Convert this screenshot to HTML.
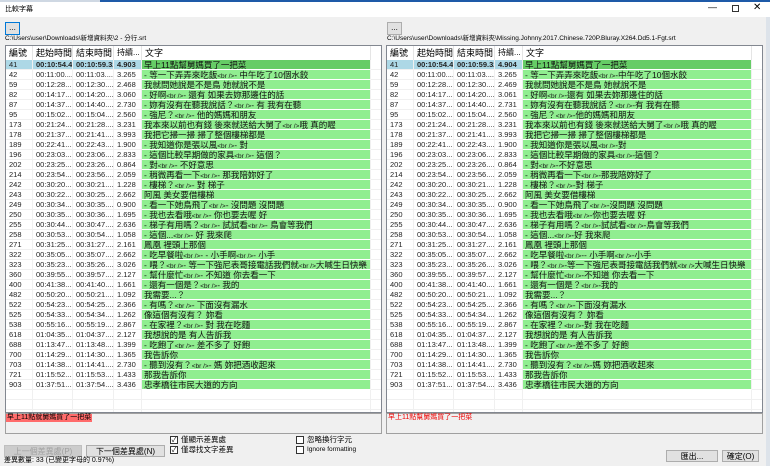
<!DOCTYPE html>
<html><head><meta charset="utf-8"><style>
*{margin:0;padding:0;box-sizing:border-box}
body{width:770px;height:466px;overflow:hidden;background:#f0f0f0;font-family:"Liberation Sans","Noto Sans CJK TC",sans-serif;position:relative;color:#000}
.a{position:absolute}
.title{left:0;top:0;width:770px;height:17px;background:#fff;border-top:2px solid #cfd8e3}
.btn{position:absolute;background:#e1e1e1;border:1px solid #adadad;font-size:8px;text-align:center;line-height:11px}
.list{position:absolute;top:45px;height:368px;background:#fff;border:1px solid #828790;overflow:hidden}
.row{position:absolute;left:0;height:10px;font-size:7.5px;line-height:10px;white-space:nowrap;color:#222}
.row div{position:absolute;top:0;height:10px;border-right:1px solid #f0f0f0;border-bottom:1px solid #f0f0f0;overflow:hidden;padding-left:3px}
.row .t{background:#90ee90;font-size:8.5px;border-bottom:1px solid #fff;padding-left:2px;color:#111}
.row .t span{font-size:6.5px}
.hdr{position:absolute;left:0;top:0;height:14px;font-size:9px;line-height:14px;white-space:nowrap}
.hdr div{position:absolute;top:0;height:14px;border-right:1px solid #e5e5e5;padding-left:3px;overflow:hidden}
.sel div{background:#add8e6}
.sel .t{background:#66cc66}
.box{position:absolute;top:413px;height:21px;border:1px solid #a0a0a0;background:#f0f0f0}
.cb{position:absolute;width:8px;height:8px;border:1px solid #333;background:#fff;font-size:7px;line-height:7px;text-align:center}
.lbl{position:absolute;font-size:7.5px;line-height:9px;white-space:nowrap}
</style></head><body>
<div class="a title"></div>
<div class="a" style="left:100px;top:0;width:670px;height:2px;background:#1e5aa8"></div>
<div class="lbl" style="left:5px;top:5px;font-size:7px">比較字幕</div>
<div class="lbl" style="left:708px;top:3px;font-size:9px">—</div>
<div class="a" style="left:732px;top:5px;width:7px;height:7px;border:1px solid #333"></div>
<div class="lbl" style="left:753px;top:3px;font-size:10px">✕</div>

<div class="btn" style="left:5px;top:22px;width:15px;height:13px;border-color:#0078d7;line-height:9px">...</div>
<div class="btn" style="left:387px;top:22px;width:15px;height:13px;line-height:9px">...</div>
<div class="lbl" style="left:5px;top:34px;font-size:6.5px">C:\Users\user\Downloads\新增資料夾\2 - 分行.srt</div>
<div class="lbl" style="left:387px;top:34px;font-size:6.5px">C:\Users\user\Downloads\新增資料夾\Missing.Johnny.2017.Chinese.720P.Bluray.X264.Dd5.1-Fgt.srt</div>

<div class="list" style="left:5px;width:377px" id="L"></div>
<div class="list" style="left:386px;width:377px" id="R"></div>

<div class="box" style="left:5px;width:377px"><div class="a" style="left:0;top:0;background:#ff6b6b;font-size:7px;line-height:8px;padding:0 1px">早上11點就舅媽買了一把菜</div></div>
<div class="box" style="left:386px;width:377px"><div class="a" style="left:1px;top:0;color:#e00;font-size:7px;line-height:8px">早上11點幫舅媽買了一把菜</div></div>

<div class="btn" style="left:4px;top:445px;width:78px;height:12px;color:#a0a0a0;background:#ccc;border-color:#bfbfbf">上一個差異處(P)</div>
<div class="btn" style="left:86px;top:445px;width:79px;height:12px">下一個差異處(N)</div>
<div class="cb" style="left:170px;top:436px">✓</div><div class="lbl" style="left:181px;top:435px">僅顯示差異處</div>
<div class="cb" style="left:170px;top:446px">✓</div><div class="lbl" style="left:181px;top:445px">僅尋找文字差異</div>
<div class="cb" style="left:296px;top:436px"></div><div class="lbl" style="left:307px;top:435px">忽略換行字元</div>
<div class="cb" style="left:296px;top:446px"></div><div class="lbl" style="left:307px;top:445px;font-size:6.5px">Ignore formatting</div>
<div class="lbl" style="left:4px;top:456px;font-size:7px">差異數量: 33 (已變更字母的 0.97%)</div>
<div class="btn" style="left:666px;top:450px;width:52px;height:12px">匯出...</div>
<div class="btn" style="left:722px;top:450px;width:37px;height:12px">確定(O)</div>
<div class="a" style="left:766px;top:17px;width:4px;height:449px;background:#dde3ea"></div>

<script>
var D=[
["41","00:10:54.42","00:10:59.32","4.903","早上11點幫舅媽買了一把菜","4.904"],
["42","00:11:00....","00:11:03....","3.265","- 等一下弄弄來吃飯<br />- 中午吃了10個水餃"],
["59","00:12:28....","00:12:30....","2.468","我就問她說是不是鳥 她就說不是","2.469"],
["82","00:14:17....","00:14:20....","3.060","- 好啊<br />- 還有 如果去妳那邊住的話","3.061"],
["87","00:14:37....","00:14:40....","2.730","- 妳有沒有在聽我說話？<br />- 有 我有在聽","2.731"],
["95","00:15:02....","00:15:04....","2.560","- 強尼？<br />- 他的媽媽和朋友"],
["173","00:21:24....","00:21:28....","3.231","我本來以前也有錢 後來就送給大舅了<br />哦 真的喔"],
["178","00:21:37....","00:21:41....","3.993","我把它掃一掃 掃了整個樓梯都是"],
["189","00:22:41....","00:22:43....","1.900","- 我知道你是張以風<br />- 對"],
["196","00:23:03....","00:23:06....","2.833","- 這個比較早期做的家具<br />- 這個？"],
["202","00:23:25....","00:23:26....","0.864","- 對<br />- 不好意思"],
["214","00:23:54....","00:23:56....","2.059","- 稍微再看一下<br />- 那我陪妳好了"],
["242","00:30:20....","00:30:21....","1.228","- 樓梯？<br />- 對 梯子"],
["243","00:30:22....","00:30:25....","2.662","阿風 美女要借樓梯"],
["249","00:30:34....","00:30:35....","0.900","- 看一下她鳥飛了<br />- 沒問題 沒問題"],
["250","00:30:35....","00:30:36....","1.695","- 我也去看哦<br />- 你也要去喔 好"],
["255","00:30:44....","00:30:47....","2.636","- 梯子有用嗎？<br />- 試試看<br />- 鳥會等我們"],
["258","00:30:53....","00:30:54....","1.058","- 這個...<br />- 好 我來爬"],
["271","00:31:25....","00:31:27....","2.161","鳳凰 裡頭上那個"],
["322","00:35:05....","00:35:07....","2.662","- 吃早餐啦<br />- - 小手啊<br />- 小手"],
["323","00:35:23....","00:35:26....","3.026","- 喂？<br />- 等一下強尼表哥接電話我們就<br />大喊生日快樂"],
["360","00:39:55....","00:39:57....","2.127","- 幫什麼忙<br />- 不知道 你去看一下"],
["400","00:41:38....","00:41:40....","1.661","- 還有一個是？<br />- 我的"],
["482","00:50:20....","00:50:21....","1.092","我需要...？"],
["522","00:54:23....","00:54:25....","2.366","- 有嗎？<br />- 下面沒有漏水"],
["525","00:54:33....","00:54:34....","1.262","像這個有沒有？ 妳看"],
["538","00:55:16....","00:55:19....","2.867","- 在家裡？<br />- 對 我在吃麵"],
["618","01:04:35....","01:04:37....","2.127","我想說的是 有人告訴我"],
["688","01:13:47....","01:13:48....","1.399","- 吃飽了<br />- 差不多了 好飽"],
["700","01:14:29....","01:14:30....","1.365","我告訴你"],
["703","01:14:38....","01:14:41....","2.730","- 聽到沒有？<br />- 媽 妳把酒收起來"],
["721","01:15:52....","01:15:53....","1.433","那我告訴你"],
["903","01:37:51....","01:37:54....","3.436","忠孝橋往市民大道的方向"]];
function esc(s){return s.replace(/</g,"&lt;").replace(/>/g,"&gt;")}
function fmt(s){return esc(s).replace(/&lt;br \/&gt;/g,"<span>&lt;br /&gt;</span>")}
function build(id,right){
 var w=[27,40,41,28,229,11],x=[],c=0;for(var i=0;i<w.length;i++){x.push(c);c+=w[i];}
 var h='<div class="hdr">';var H=["編號","起始時間","結束時間","持續...","文字",""];
 for(var i=0;i<6;i++)h+='<div style="left:'+x[i]+'px;width:'+w[i]+'px'+(i==3?';font-size:8px':'')+'">'+H[i]+'</div>';
 h+='</div>';
 for(var r=0;r<37;r++){
  var d=D[r]||["","","","",""];
  var t=d[4];if(right&&t)t=t.replace(/<br \/>- /g,"<br />-");
  var dur=right&&d[5]?d[5]:d[3];
  h+='<div class="row'+(r==0?' sel':'')+'" style="top:'+(14+r*10)+'px">';
  var v=[d[0],d[1],d[2],dur];
  for(var i=0;i<4;i++)h+='<div style="left:'+x[i]+'px;width:'+w[i]+'px'+(r==0&&i>0&&i<4?';font-weight:bold':'')+'">'+v[i]+'</div>';
  h+='<div class="'+(D[r]?'t':'')+'" style="left:'+x[4]+'px;width:'+w[4]+'px">'+(t?fmt(t):'')+'</div>';
  h+='<div style="left:'+x[5]+'px;width:'+w[5]+'px;background:#fff"></div></div>';
 }
 document.getElementById(id).innerHTML=h;
}
build("L",0);build("R",1);
</script>
</body></html>
